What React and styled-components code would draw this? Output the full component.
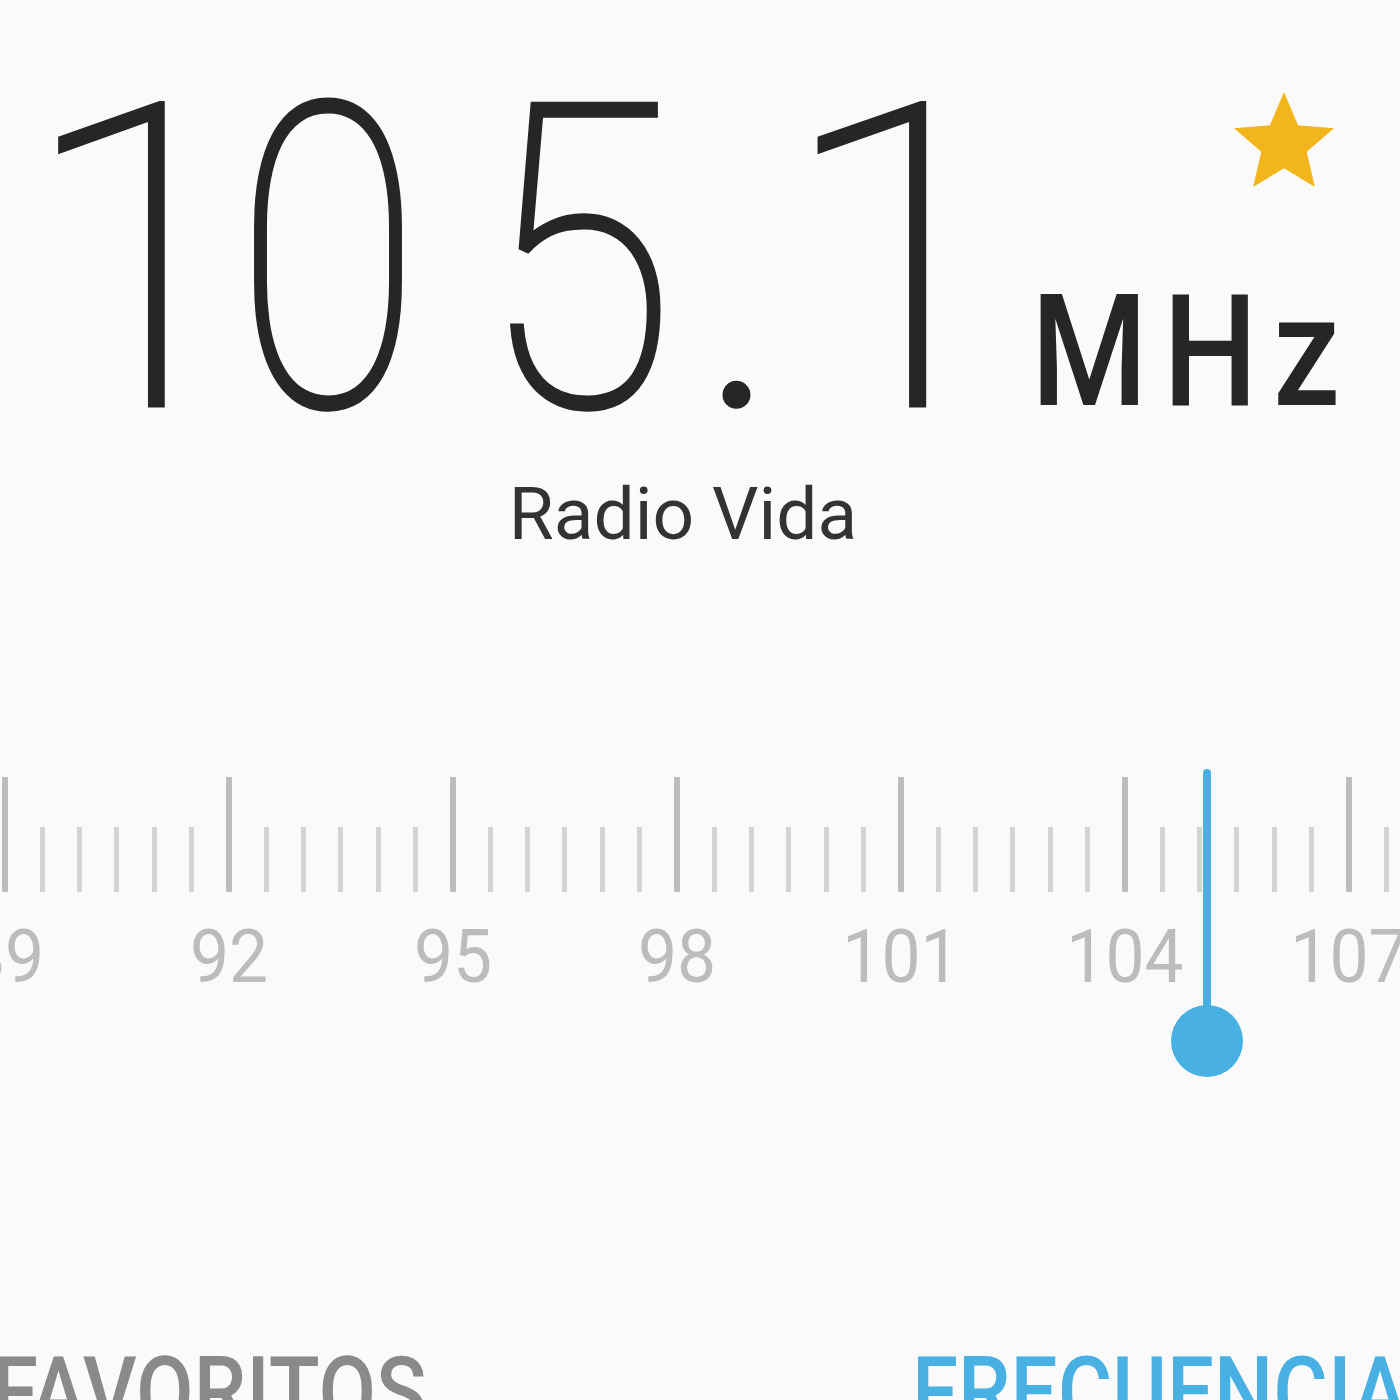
import React from 'react';
import styled, { createGlobalStyle } from 'styled-components';

const GlobalStyle = createGlobalStyle`
  html, body {
    margin: 0;
    padding: 0;
    background: #fafafa;
  }
  body {
    font-family: Roboto, "Noto Sans", sans-serif;
  }
`;

// dial geometry: 92 MHz sits at x=229, 3 MHz per 224px
const PX_PER_MHZ = 224 / 3;
const ORIGIN_FREQ = 92;
const ORIGIN_X = 229;
const xOf = (f) => ORIGIN_X + (f - ORIGIN_FREQ) * PX_PER_MHZ;

const CURRENT = 105.1;
const TICK_STEP = 0.5;
const TICK_SLOT = TICK_STEP * PX_PER_MHZ;
const LABEL_SLOT = 3 * PX_PER_MHZ;

const ticks = [];
for (let f = 88.5; f <= 108; f += TICK_STEP) ticks.push(f);
const labels = [89, 92, 95, 98, 101, 104, 107, 110];

const freqGlyphs = [
  { ch: '1', width: 124, scale: 1.04 },
  { ch: '0', width: 250, scale: 0.8 },
  { ch: '5', width: 250, scale: 0.84 },
  { ch: '.', width: 74, scale: 1 },
  { ch: '1', width: 250, scale: 1.06 },
];

const Screen = styled.div`
  position: relative;
  width: 1400px;
  height: 1400px;
  overflow: hidden;
  background: #fafafa;
  display: flex;
  flex-direction: column;
`;

const Header = styled.header`
  position: relative;
  display: flex;
  flex-direction: column;
  align-items: center;
  padding-top: 49px;
`;

const FreqRow = styled.div`
  display: flex;
  align-items: baseline;
  width: 100%;
  padding-left: 79px;
  box-sizing: border-box;
  color: #262626;
`;

const Glyph = styled.span`
  display: inline-flex;
  justify-content: center;
  flex: none;
  width: ${(p) => p.$width}px;
  font-size: 423px;
  font-weight: 100;
  line-height: 1;
  -webkit-text-stroke: 5px #262626;
  transform: scaleX(${(p) => p.$scale});
`;

const Unit = styled.span`
  display: inline-block;
  margin-left: 4px;
  font-size: 155px;
  font-weight: 500;
  line-height: 1;
  letter-spacing: 18px;
  transform: scaleX(0.86);
  transform-origin: left center;
`;

const StarButton = styled.button`
  position: absolute;
  top: 82px;
  right: 56px;
  width: 120px;
  height: 120px;
  padding: 0;
  border: none;
  background: none;
  cursor: pointer;

  svg {
    display: block;
  }
`;

const StationName = styled.div`
  margin-top: 6px;
  margin-right: 34px;
  font-size: 73px;
  line-height: 1;
  color: #333;
`;

const Dial = styled.section`
  position: relative;
  margin-top: 226px;
`;

const TickTrack = styled.div`
  display: flex;
  align-items: flex-end;
  height: 115px;
  margin-left: ${(p) => p.$offset}px;
`;

const TickSlot = styled.div`
  flex: none;
  width: ${TICK_SLOT}px;
  display: flex;
  justify-content: center;
`;

const Tick = styled.div`
  width: ${(p) => (p.$major ? 6 : 5)}px;
  height: ${(p) => (p.$major ? 115 : 65)}px;
  background: ${(p) => (p.$major ? '#bdbdbd' : '#d4d4d4')};
`;

const LabelTrack = styled.div`
  display: flex;
  margin-top: 28px;
  margin-left: ${(p) => p.$offset}px;
`;

const Label = styled.div`
  flex: none;
  width: ${LABEL_SLOT}px;
  text-align: center;
  font-size: 74px;
  line-height: 1;
  color: #bcbcbc;
  transform: scaleX(0.94);
`;

const Needle = styled.div`
  position: absolute;
  top: -8px;
  width: 8px;
  height: 272px;
  margin-left: -4px;
  background: #48b0e2;
  border-radius: 4px 4px 0 0;

  &::after {
    content: '';
    position: absolute;
    left: 50%;
    bottom: -36px;
    width: 72px;
    height: 72px;
    margin-left: -36px;
    border-radius: 50%;
    background: #48b0e2;
  }
`;

const TabBar = styled.nav`
  display: flex;
  margin-top: 350px;
  margin-left: -8px;
`;

const Tab = styled.div`
  flex: none;
  width: ${(p) => p.$width}px;
  font-size: 96px;
  font-weight: 500;
  line-height: 1;
  white-space: nowrap;
  transform: scaleX(0.87);
  transform-origin: left center;
  color: ${(p) => (p.$active ? '#48b0e2' : '#8a8a8a')};
`;

const Star = () => (
  <svg width="120" height="120" viewBox="0 0 24 24">
    <path
      fill="#f2b61c"
      d="M12 17.27L18.18 21l-1.64-7.03L22 9.24l-7.19-.61L12 2 9.19 8.63 2 9.24l5.46 4.73L5.82 21z"
    />
  </svg>
);

const App = () => {
  const tickOffset = xOf(ticks[0]) - TICK_SLOT / 2;
  const labelOffset = xOf(labels[0]) - LABEL_SLOT / 2;

  return (
    <>
      <GlobalStyle />
      <Screen>
        <Header>
          <FreqRow aria-label="105.1 MHz">
            {freqGlyphs.map((g, i) => (
              <Glyph key={i} $width={g.width} $scale={g.scale}>
                {g.ch}
              </Glyph>
            ))}
            <Unit>MHz</Unit>
          </FreqRow>
          <StarButton aria-label="Favorito">
            <Star />
          </StarButton>
          <StationName>Radio Vida</StationName>
        </Header>

        <Dial>
          <TickTrack $offset={tickOffset}>
            {ticks.map((f) => (
              <TickSlot key={f}>
                <Tick $major={(f - ORIGIN_FREQ) % 3 === 0} />
              </TickSlot>
            ))}
          </TickTrack>
          <LabelTrack $offset={labelOffset}>
            {labels.map((l) => (
              <Label key={l}>{l}</Label>
            ))}
          </LabelTrack>
          <Needle style={{ left: xOf(CURRENT) }} />
        </Dial>

        <TabBar>
          <Tab $width={920}>FAVORITOS</Tab>
          <Tab $width={600} $active>
            FRECUENCIA
          </Tab>
        </TabBar>
      </Screen>
    </>
  );
};

export default App;
